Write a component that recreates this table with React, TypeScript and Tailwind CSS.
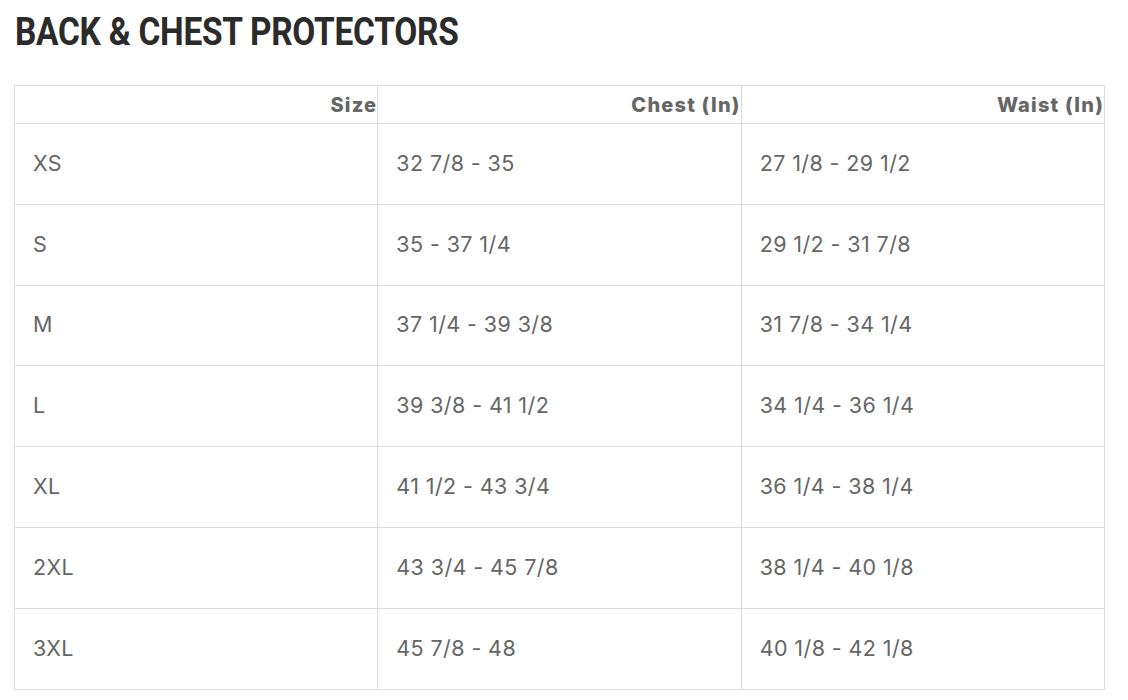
const rows = [
  ['XS', '32 7/8 - 35', '27 1/8 - 29 1/2'],
  ['S', '35 - 37 1/4', '29 1/2 - 31 7/8'],
  ['M', '37 1/4 - 39 3/8', '31 7/8 - 34 1/4'],
  ['L', '39 3/8 - 41 1/2', '34 1/4 - 36 1/4'],
  ['XL', '41 1/2 - 43 3/4', '36 1/4 - 38 1/4'],
  ['2XL', '43 3/4 - 45 7/8', '38 1/4 - 40 1/8'],
  ['3XL', '45 7/8 - 48', '40 1/8 - 42 1/8'],
];

export default function App() {
  return (
    <div className="w-[1128px] h-[700px] bg-white overflow-hidden">
      <h1 className="ml-[15px] pt-[10px] h-[85px] text-[38px] leading-[44px] font-bold tracking-[-0.3px] text-[#2b2b2b] [font-family:Roboto,sans-serif] origin-left scale-x-[0.88]">
        BACK &amp; CHEST PROTECTORS
      </h1>
      <table className="ml-[14px] w-[1091px] border-collapse border border-[#dcdcdc] [font-family:Inter,sans-serif] text-[#666]">
        <thead>
          <tr className="h-[38px]">
            {['Size', 'Chest (In)', 'Waist (In)'].map((h) => (
              <th key={h} className="w-[364px] border border-[#dcdcdc] text-right align-bottom pb-[6px] pr-0 text-[20px] leading-[24px] font-extrabold tracking-[1.2px] text-[#666]">
                {h}
              </th>
            ))}
          </tr>
        </thead>
        <tbody>
          {rows.map((r) => (
            <tr key={r[0]} className="h-[80.8px]">
              {r.map((c, i) => (
                <td key={i} className="border border-[#dcdcdc] pl-[18px] pb-[2px] text-[21.5px] leading-[26px] tracking-[0.4px] text-[#666]">
                  {c}
                </td>
              ))}
            </tr>
          ))}
        </tbody>
      </table>
    </div>
  );
}
